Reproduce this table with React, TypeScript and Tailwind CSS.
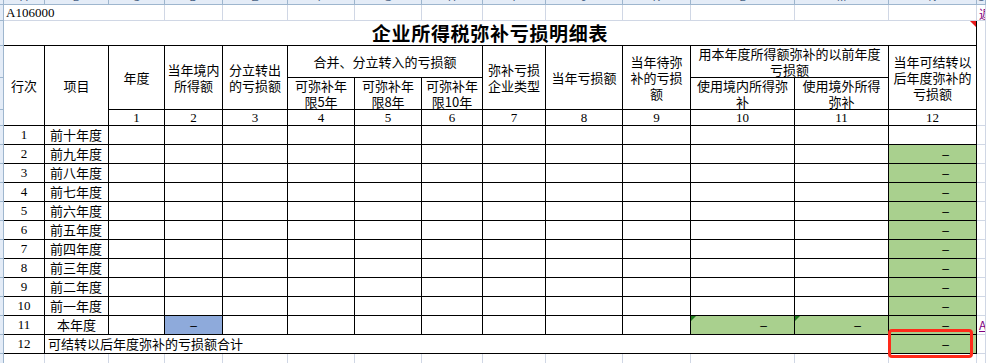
import * as React from "react";

// 行次 / 项目 labels for the ten prior years
const priorYears = [
  "前十年度",
  "前九年度",
  "前八年度",
  "前七年度",
  "前六年度",
  "前五年度",
  "前四年度",
  "前三年度",
  "前二年度",
  "前一年度",
];

const colLetters = ["A", "B", "C", "D", "E", "F", "G", "H", "I", "J", "K", "L", "M", "N", "O"];

// left row-header strip, one entry per sheet row
const rowHeights = [
  "h-[16px]",
  "h-[25px]",
  "h-[32px]",
  "h-[32px]",
  "h-[16px]",
  ...Array.from({ length: 12 }, () => "h-[19px]"),
  "h-[20px]",
];

const bd = "border-r border-b border-black";
const grid = "border-r border-b border-[#d0d7e5]";
const serif = "font-['Liberation_Serif','Noto_Sans_CJK_SC',serif]";
const hd = `${bd} flex items-center justify-center text-center leading-[16px] text-[13px]`;

function Dash({ tone, flag }: { tone: "green" | "blue"; flag?: boolean }) {
  return (
    <div
      className={`${bd} relative flex items-center text-[12px] font-['Liberation_Sans',sans-serif] ${
        tone === "green"
          ? "bg-[#a9d08e] justify-end pr-[27px]"
          : "bg-[#8eaadb] justify-center"
      }`}
    >
      {flag && (
        <span className="absolute left-0 top-0 h-0 w-0 border-t-[5px] border-r-[5px] border-t-[#1d7a1d] border-r-transparent" />
      )}
      <span className="pt-[2px]">–</span>
    </div>
  );
}

function Empty({ n }: { n: number }) {
  return (
    <>
      {Array.from({ length: n }).map((_, i) => (
        <div key={i} className={bd} />
      ))}
    </>
  );
}

function Rest({ children }: { children?: React.ReactNode }) {
  return (
    <div className={`${grid} overflow-hidden whitespace-nowrap pl-[2px] text-[12px] text-[#800080] underline`}>
      {children}
    </div>
  );
}

export default function App() {
  return (
    <div className="relative h-[363px] w-[986px] overflow-hidden bg-white text-black font-['Noto_Sans_CJK_SC',sans-serif]">
      {/* column letter header, mostly scrolled out of view */}
      <div className="flex h-[5px] border-b border-[#9eb6ce] bg-[#e4ecf7]">
        <div className="w-[4px] border-r border-[#9eb6ce]" />
        <div className="grid flex-1 grid-cols-[41px_64px_56px_58px_65px_67px_67px_61px_63px_77px_68px_104px_94px_88px_1fr]">
          {colLetters.map((l) => (
            <div key={l} className="overflow-hidden border-r border-[#9eb6ce]">
              <div className="-mt-[9px] text-center text-[11px] leading-[12px] text-[#4a6284] font-['Liberation_Sans',sans-serif]">
                {l}
              </div>
            </div>
          ))}
        </div>
      </div>

      <div className="flex">
        {/* row header strip */}
        <div className="flex w-[4px] flex-col border-r border-[#9eb6ce] bg-[#e4ecf7]">
          {rowHeights.map((h, i) => (
            <div key={i} className={`${h} border-b border-[#9eb6ce]`} />
          ))}
        </div>

        <div className="grid flex-1 grid-cols-[41px_64px_56px_58px_65px_67px_67px_61px_63px_77px_68px_104px_94px_88px_1fr] grid-rows-[16px_25px_32px_32px_16px_repeat(12,19px)_20px]">
          {/* row 1: form code */}
          <div className={`${grid} ${serif} col-span-3 flex items-center whitespace-nowrap pl-[2px] text-[13px]`}>
            A106000
          </div>
          {Array.from({ length: 11 }).map((_, i) => (
            <div key={i} className={grid} />
          ))}
          <Rest>返回</Rest>

          {/* row 2: title */}
          <div className="relative col-span-14 flex items-center justify-center border-r border-b border-black text-[19px] font-bold tracking-[0.7px]">
            企业所得税弥补亏损明细表
            <span className="absolute right-0 top-0 h-0 w-0 border-t-[6px] border-l-[6px] border-t-[#e8191b] border-l-transparent" />
          </div>
          <div className="border-r border-[#d0d7e5]" />

          {/* header rows */}
          <div className={`${hd} row-span-3`}>行次</div>
          <div className={`${hd} row-span-3`}>项目</div>
          <div className={`${hd} row-span-2`}>年度</div>
          <div className={`${hd} row-span-2`}>
            当年境内
            <br />
            所得额
          </div>
          <div className={`${hd} row-span-2`}>
            分立转出
            <br />
            的亏损额
          </div>
          <div className={`${hd} col-span-3`}>合并、分立转入的亏损额</div>
          <div className={`${hd} row-span-2`}>
            弥补亏损
            <br />
            企业类型
          </div>
          <div className={`${hd} row-span-2`}>当年亏损额</div>
          <div className={`${hd} row-span-2`}>
            当年待弥
            <br />
            补的亏损
            <br />
            额
          </div>
          <div className={`${hd} col-span-2`}>
            用本年度所得额弥补的以前年度
            <br />
            亏损额
          </div>
          <div className={`${hd} row-span-2`}>
            当年可结转以
            <br />
            后年度弥补的
            <br />
            亏损额
          </div>
          <div className={`${grid} row-span-3`} />

          <div className={hd}>
            可弥补年
            <br />
            限5年
          </div>
          <div className={hd}>
            可弥补年
            <br />
            限8年
          </div>
          <div className={hd}>
            可弥补年
            <br />
            限10年
          </div>
          <div className={hd}>
            使用境内所得弥
            <br />
            补
          </div>
          <div className={hd}>
            使用境外所得
            <br />
            弥补
          </div>

          {Array.from({ length: 12 }).map((_, i) => (
            <div key={i} className={`${hd} ${serif}`}>
              {i + 1}
            </div>
          ))}

          {/* rows 1-10: prior years */}
          {priorYears.map((label, i) => (
            <React.Fragment key={label}>
              <div className={`${bd} ${serif} flex items-center justify-center text-[13px]`}>{i + 1}</div>
              <div className={`${bd} flex items-center pl-[5px] text-[13px]`}>{label}</div>
              <Empty n={11} />
              {i === 0 ? <div className={bd} /> : <Dash tone="green" />}
              <Rest />
            </React.Fragment>
          ))}

          {/* row 11: current year */}
          <div className={`${bd} ${serif} flex items-center justify-center text-[13px]`}>11</div>
          <div className={`${bd} flex items-center justify-center text-[13px]`}>本年度</div>
          <Empty n={1} />
          <Dash tone="blue" />
          <Empty n={7} />
          <Dash tone="green" flag />
          <Dash tone="green" flag />
          <Dash tone="green" />
          <Rest>A</Rest>

          {/* row 12: total */}
          <div className={`${bd} ${serif} flex items-center justify-center text-[13px]`}>12</div>
          <div className={`${bd} col-span-12 flex items-center pl-[3px] text-[13px]`}>
            可结转以后年度弥补的亏损额合计
          </div>
          <Dash tone="green" />
          <Rest />

          {/* empty sheet row below */}
          {Array.from({ length: 15 }).map((_, i) => (
            <div key={i} className="border-r border-[#d0d7e5]" />
          ))}
        </div>
      </div>

      {/* red highlight drawn over the total cell */}
      <div className="pointer-events-none absolute left-[888px] top-[329px] h-[29px] w-[85px] rounded-[4px] border-[3px] border-[#ff2a1a]" />
    </div>
  );
}
